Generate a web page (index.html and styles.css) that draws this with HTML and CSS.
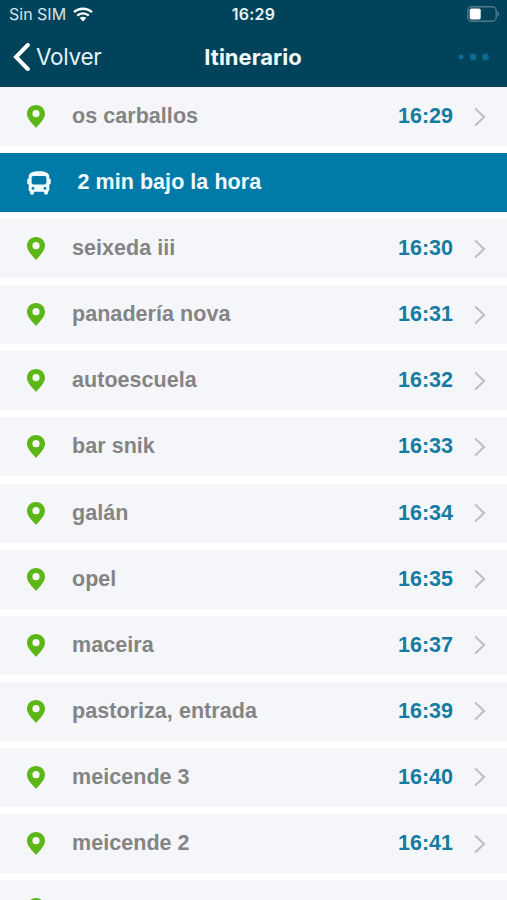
FILE: index.html
```
<!DOCTYPE html>
<html lang="es">
<head>
    <meta charset="UTF-8">
    <meta name="viewport" content="width=device-width, initial-scale=1.0">
    <title>Itinerario</title>
    <link rel="stylesheet" href="styles.css">
</head>
<body>

<!-- Shared icons -->
<svg class="icon-defs" width="0" height="0">
    <symbol id="pin" viewBox="0 0 18 23">
        <path fill-rule="evenodd" d="M9 0C4 0 0 3.900 0 8.800C0 13.500 4.500 18 9 23C13.500 18 18 13.500 18 8.800C18 3.900 14 0 9 0ZM9 5.100A3.600 3.600 0 1 1 9 12.300A3.600 3.600 0 1 1 9 5.100Z"/>
    </symbol>
    <symbol id="chevron" viewBox="0 0 12 20">
        <path d="M1.200 1.500L10 10L1.200 18.500" fill="none" stroke="currentColor" stroke-width="2.200"/>
    </symbol>
</svg>

<header class="header">
    <div class="status-bar">
        <div class="carrier">
            <span>Sin SIM</span>
            <svg class="wifi" viewBox="0 0 20 15">
                <path d="M1 5.200C6 .5 14 .5 19 5.200M4.200 8.600C7.500 5.600 12.500 5.600 15.800 8.600" fill="none" stroke="#fff" stroke-width="2.400"/>
                <path d="M6.700 11.100C8.600 9.300 11.400 9.300 13.300 11.100L10 14.500Z" fill="#fff"/>
            </svg>
        </div>
        <span class="clock">16:29</span>
        <svg class="battery" viewBox="0 0 33 16">
            <rect x=".8" y=".8" width="28.400" height="14.400" rx="4" fill="none" stroke="#52798b" stroke-width="1.400"/>
            <rect x="2.700" y="2.500" width="11" height="11" rx="1.800" fill="#fff"/>
            <path d="M30.500 5.500C32.800 6.500 32.800 9.500 30.500 10.500Z" fill="#52798b"/>
        </svg>
    </div>
    <div class="nav-bar">
        <a class="back">
            <svg class="back-arrow" viewBox="0 0 17 28">
                <path d="M14.800 2L3 14L14.800 26" fill="none" stroke="#fff" stroke-width="4"  stroke-linecap="round"/>
            </svg>
            <span>Volver</span>
        </a>
        <h1>Itinerario</h1>
        <svg class="more" viewBox="0 0 34 8">
            <circle cx="4" cy="4" r="2.500"/>
            <circle cx="16" cy="4" r="3.400"/>
            <circle cx="28.500" cy="4" r="3.400"/>
        </svg>
    </div>
</header>

<main class="stop-list">
    <div class="stop"><svg class="pin"><use href="#pin"/></svg><span class="name">os carballos</span><span class="time">16:29</span><svg class="chevron"><use href="#chevron"/></svg></div>

    <!-- Current position of the bus -->
    <div class="stop bus-status">
        <svg class="bus" viewBox="0 0 24 24">
            <path fill-rule="evenodd" d="M12 .3C18.500 .3 22.300 2 22.300 5.500V7.500C23.300 7.600 23.800 8.200 23.800 9V12C23.800 12.900 23.300 13.400 22.300 13.500V18.500C22.300 19.700 21.800 20.300 21 20.500V22C21 24 17 24 17 22V20.700H7V22C7 24 3 24 3 22V20.500C2.200 20.300 1.700 19.700 1.700 18.500V13.500C.7 13.400 .2 12.900 .2 12V9C.2 8.200 .7 7.600 1.700 7.500V5.500C1.700 2 5.500 .3 12 .3ZM6.400 5.100C5.300 5.100 4.600 5.800 4.600 6.900V11.600C4.600 12.700 5.300 13.400 6.400 13.400H17.600C18.700 13.400 19.400 12.700 19.400 11.600V6.900C19.400 5.800 18.700 5.100 17.600 5.100ZM6 16A1.400 1.400 0 1 0 6 18.800A1.400 1.400 0 1 0 6 16ZM18 16A1.400 1.400 0 1 0 18 18.800A1.400 1.400 0 1 0 18 16Z"/>
        </svg>
        <span class="name">2 min bajo la hora</span>
    </div>

    <div class="stop"><svg class="pin"><use href="#pin"/></svg><span class="name">seixeda iii</span><span class="time">16:30</span><svg class="chevron"><use href="#chevron"/></svg></div>
    <div class="stop"><svg class="pin"><use href="#pin"/></svg><span class="name">panadería nova</span><span class="time">16:31</span><svg class="chevron"><use href="#chevron"/></svg></div>
    <div class="stop"><svg class="pin"><use href="#pin"/></svg><span class="name">autoescuela</span><span class="time">16:32</span><svg class="chevron"><use href="#chevron"/></svg></div>
    <div class="stop"><svg class="pin"><use href="#pin"/></svg><span class="name">bar snik</span><span class="time">16:33</span><svg class="chevron"><use href="#chevron"/></svg></div>
    <div class="stop"><svg class="pin"><use href="#pin"/></svg><span class="name">galán</span><span class="time">16:34</span><svg class="chevron"><use href="#chevron"/></svg></div>
    <div class="stop"><svg class="pin"><use href="#pin"/></svg><span class="name">opel</span><span class="time">16:35</span><svg class="chevron"><use href="#chevron"/></svg></div>
    <div class="stop"><svg class="pin"><use href="#pin"/></svg><span class="name">maceira</span><span class="time">16:37</span><svg class="chevron"><use href="#chevron"/></svg></div>
    <div class="stop"><svg class="pin"><use href="#pin"/></svg><span class="name">pastoriza, entrada</span><span class="time">16:39</span><svg class="chevron"><use href="#chevron"/></svg></div>
    <div class="stop"><svg class="pin"><use href="#pin"/></svg><span class="name">meicende 3</span><span class="time">16:40</span><svg class="chevron"><use href="#chevron"/></svg></div>
    <div class="stop"><svg class="pin"><use href="#pin"/></svg><span class="name">meicende 2</span><span class="time">16:41</span><svg class="chevron"><use href="#chevron"/></svg></div>
    <div class="stop"><svg class="pin"><use href="#pin"/></svg></div>
</main>

</body>
</html>
```
FILE: styles.css
```
* {
    box-sizing: border-box;
}
body {
    margin: 0;
    height: 100vh;
    overflow: hidden;
    display: flex;
    flex-direction: column;
    background-color: #fff;
    font-family: "Liberation Sans", Arial, sans-serif;
}
svg {
    display: block;
    flex-shrink: 0;
}
.icon-defs {
    position: absolute;
}
.header {
    flex-shrink: 0;
    height: 87px;
    background-color: #00435a;
    color: #fff;
    font-family: Inter, sans-serif;
}
.status-bar {
    display: grid;
    grid-template-columns: 1fr auto 1fr;
    align-items: center;
    height: 28px;
    padding: 0 7px 0 9px;
    font-size: 16px;
}
.carrier {
    display: flex;
    align-items: center;
    gap: 7px;
    color: #d5e5ec;
}
.wifi {
    width: 20px;
    height: 15px;
}
.clock {
    margin-right: 2px;
    font-weight: 600;
    letter-spacing: 0.2px;
    color: #e6f2f6;
}
.battery {
    width: 33px;
    height: 16px;
    justify-self: end;
}
.nav-bar {
    display: grid;
    grid-template-columns: 1fr auto 1fr;
    align-items: center;
    height: 57px;
    padding: 0 16px 0 13px;
}
.back {
    display: flex;
    align-items: center;
    gap: 6px;
    font-size: 22.5px;
    letter-spacing: -0.3px;
    color: #e3f3fa;
}
.back-arrow {
    width: 17px;
    height: 28px;
}
.nav-bar h1 {
    margin: 0 0 0 2px;
    font-size: 22px;
    font-weight: 700;
    color: #f0fafd;
}
.more {
    width: 34px;
    height: 8px;
    justify-self: end;
    fill: #0c6a90;
}
.stop-list {
    display: flex;
    flex-direction: column;
    gap: 7.1px;
}
.stop {
    display: flex;
    align-items: center;
    flex-shrink: 0;
    height: 59px;
    padding: 0 21px 0 27px;
    background-color: #f4f6fa;
    font-size: 21.5px;
    font-weight: bold;
    color: #848484;
}
.pin {
    width: 18px;
    height: 23px;
    margin-right: 27px;
    fill: #5cb615;
}
.name {
    flex: 1;
    letter-spacing: 0.05px;
}
.time {
    color: #167ba1;
}
.chevron {
    width: 12px;
    height: 20px;
    margin-left: 21px;
    color: #bfc1c5;
}
.bus-status {
    background-color: #007ba8;
    color: #f1fbff;
}
.bus {
    width: 24px;
    height: 24px;
    margin-right: 26.5px;
    fill: #f1fbff;
}
```
